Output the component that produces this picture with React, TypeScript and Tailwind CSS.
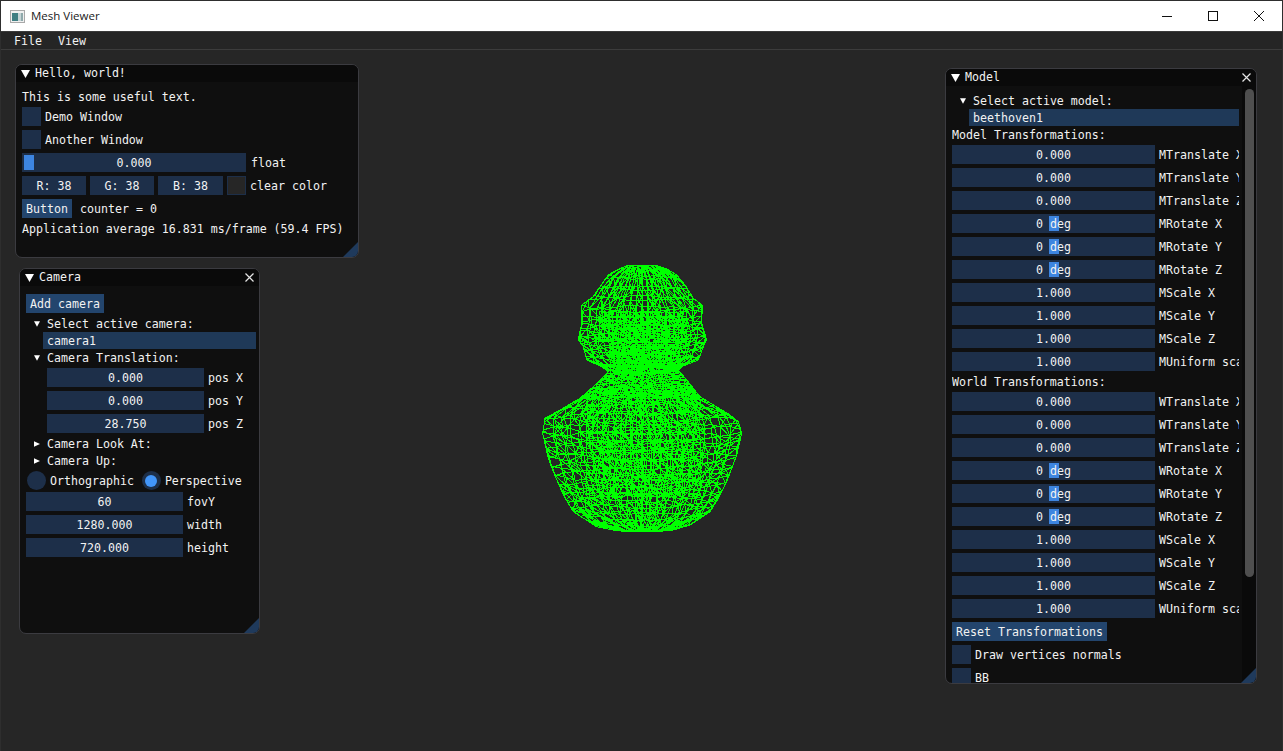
import React from 'react';

// outline of the bust, in zoomed units (3x, page offset 530,255)
const RIGHT: [number, number][] = [[32,380],[42,410],[60,440],[90,465],[130,490],[150,517],[205,515],[255,530],[275,520],[315,505],[335,455],[345,445],[375,470],[400,490],[425,510],[480,600],[500,625],[535,635],[600,620],[680,590],[730,565],[770,540],[810,480],[825,430],[830,380]];
const LEFT: [number, number][] = [[32,290],[45,260],[60,235],[95,210],[125,190],[150,155],[205,155],[255,145],[275,160],[315,170],[335,215],[350,235],[375,210],[395,190],[430,150],[465,90],[490,45],[535,38],[610,55],[650,70],[720,100],[770,130],[815,200],[825,250],[830,290]];

const lerpChain = (chain: [number, number][], y: number) => {
  for (let i = 0; i < chain.length - 1; i++) {
    const [y0, x0] = chain[i];
    const [y1, x1] = chain[i + 1];
    if (y >= y0 && y <= y1) return x0 + ((x1 - x0) * (y - y0)) / (y1 - y0);
  }
  return chain[y < chain[0][0] ? 0 : chain.length - 1][1];
};

const outline = [...RIGHT, ...[...LEFT].reverse()].map(([y, x]) => `${(x / 3).toFixed(1)},${(y / 3).toFixed(1)}`).join(' ');

const buildMesh = () => {
  let seed = 1337;
  const rnd = () => {
    seed = (seed * 16807) % 2147483647;
    return seed / 2147483647;
  };
  let d = '';
  const seg = (a: number[], b: number[]) => {
    d += `M${a[0].toFixed(1)} ${a[1].toFixed(1)}L${b[0].toFixed(1)} ${b[1].toFixed(1)}`;
  };
  const sheet = (top: number, bottom: number, cols: number, pow: number, sagK: number, step: (y: number) => number, jitter: number, minX = 0, maxX = 700) => {
    const ys: number[] = [];
    let y = top;
    while (y < bottom) {
      ys.push(y);
      y += step(y);
    }
    ys.push(bottom);
    const grid = ys.map((ry) => {
      const l = Math.max(lerpChain(LEFT, ry), minX);
      const r = Math.min(lerpChain(RIGHT, ry), maxX);
      const cx = (l + r) / 2;
      const hw = (r - l) / 2;
      return Array.from({ length: cols + 1 }, (_, i) => {
        const u = (i / cols) * 2 - 1;
        const s = Math.sign(u) * Math.pow(Math.abs(u), pow);
        const sag = (1 - s * s) * hw * sagK;
        return [(cx + hw * s + (rnd() - 0.5) * jitter) / 3, (ry + sag + (rnd() - 0.5) * jitter) / 3];
      });
    });
    grid.forEach((row, j) => {
      row.forEach((p, i) => {
        if (row[i + 1]) seg(p, row[i + 1]);
        const next = grid[j + 1];
        if (!next) return;
        seg(p, next[i]);
        if (next[i + 1] && rnd() > 0.45) seg(p, next[i + 1]);
        else if (next[i - 1] && rnd() > 0.6) seg(p, next[i - 1]);
      });
    });
  };
  // head: open cells with a tighter patch over the face
  sheet(32, 345, 14, 1.1, 0.1, (y) => (y < 170 ? 30 : 20), 6);
  sheet(40, 345, 18, 1.1, -0.08, (y) => (y < 170 ? 32 : 22), 6);
  sheet(170, 260, 22, 1.1, 0.02, () => 13, 4, 210, 470);
  // neck: nearly solid, filling out to the silhouette below the jaw
  sheet(265, 335, 20, 1.2, 0.03, () => 8, 6, 240, 450);
  sheet(330, 425, 24, 1.1, 0.03, () => 6, 6);
  // chest
  sheet(400, 830, 18, 1.1, 0.12, (y) => (y < 700 ? 26 : 20), 9);
  sheet(410, 830, 24, 1.15, -0.08, (y) => (y < 700 ? 28 : 22), 9);
  sheet(430, 720, 20, 1, 0.04, () => 20, 10, 170, 510);
  return d;
};

const meshPath = buildMesh();

const Arrow = ({ open, size = 'sm' }: { open: boolean; size?: 'sm' | 'lg' }) => (
  <svg width={size === 'lg' ? 9 : 6} height={size === 'lg' ? 8 : 6} viewBox="0 0 9 8" className="shrink-0">
    <polygon points={open ? '0,0 9,0 4.5,8' : '0,0 9,4 0,8'} fill="#fff" />
  </svg>
);

const CloseIcon = () => (
  <svg width="9" height="9" viewBox="0 0 9 9" className="shrink-0">
    <path d="M0.5 0.5L8.5 8.5M8.5 0.5L0.5 8.5" stroke="#e6e6e6" strokeWidth="1.2" />
  </svg>
);

const Field = ({ value, width, grab }: { value: string; width: string; grab?: boolean }) => (
  <div className={`relative h-[19px] shrink-0 bg-[#1d2f49] flex items-center justify-center ${width}`}>
    {grab && <div className="absolute left-1/2 -translate-x-1/2 top-[2px] w-[10px] h-[15px] bg-[#3d85e0]" />}
    <span className="relative pt-[3px]">{value}</span>
  </div>
);

const Row = ({ value, label, width, grab }: { value: string; label: string; width: string; grab?: boolean }) => (
  <div className="flex items-center gap-[4px] h-[19px] whitespace-nowrap">
    <Field value={value} width={width} grab={grab} />
    <span className="pt-[3px]">{label}</span>
  </div>
);

const Check = ({ label }: { label: string }) => (
  <div className="flex items-center gap-[4px] h-[19px] whitespace-nowrap">
    <div className="w-[19px] h-[19px] shrink-0 bg-[#1d2f49]" />
    <span className="pt-[3px]">{label}</span>
  </div>
);

const Tree = ({ label, open, indent }: { label: string; open: boolean; indent: string }) => (
  <div className={`flex items-center h-[17px] whitespace-nowrap ${indent}`}>
    <div className="w-[13px] shrink-0">
      <Arrow open={open} />
    </div>
    <span className="pt-[3px]">{label}</span>
  </div>
);

const Radio = ({ label, on }: { label: string; on?: boolean }) => (
  <div className="flex items-center gap-[4px]">
    <div className="w-[19px] h-[19px] rounded-full bg-[#1d2f49] flex items-center justify-center">
      {on && <div className="w-[12px] h-[12px] rounded-full bg-[#4296fa]" />}
    </div>
    <span className="pt-[3px]">{label}</span>
  </div>
);

const Panel = ({ title, pos, close, children }: { title: string; pos: string; close?: boolean; children: React.ReactNode }) => (
  <div className={`absolute flex flex-col overflow-hidden rounded-[7px] border border-[#3b3b40] bg-[#0f0f0f] ${pos}`}>
    <div className="flex items-center h-[17px] shrink-0 bg-[#0a0a0a] pl-[5px] pr-[5px]">
      <Arrow open size="lg" />
      <span className="ml-[5px] flex-1 pt-px">{title}</span>
      {close && <CloseIcon />}
    </div>
    {children}
    <div className="absolute right-0 bottom-0 w-[15px] h-[15px] bg-[#1f3a5c] [clip-path:polygon(100%_0,100%_100%,0_100%)]" />
  </div>
);

const MODEL_ROWS = (p: string) => [
  { label: `${p}Translate X`, value: '0.000' },
  { label: `${p}Translate Y`, value: '0.000' },
  { label: `${p}Translate Z`, value: '0.000' },
  { label: `${p}Rotate X`, value: '0 deg', grab: true },
  { label: `${p}Rotate Y`, value: '0 deg', grab: true },
  { label: `${p}Rotate Z`, value: '0 deg', grab: true },
  { label: `${p}Scale X`, value: '1.000' },
  { label: `${p}Scale Y`, value: '1.000' },
  { label: `${p}Scale Z`, value: '1.000' },
  { label: `${p}Uniform scale`, value: '1.000' },
];

const App: React.FC = () => {
  return (
    <div className="w-[1283px] h-[751px] flex flex-col overflow-hidden bg-[#262626] border-t border-x border-[#2e2e2e] font-['DejaVu_Sans_Mono',monospace] text-[11.62px] leading-none text-[#f2f2f2]">
      {/* Native title bar */}
      <div className="h-[30px] shrink-0 bg-white flex items-center border-b border-[#3a3a3a] box-content font-['Open_Sans',sans-serif] text-[11.5px] text-[#1a1a1a]">
        <svg width="15" height="13" viewBox="0 0 15 13" className="ml-[9px] mr-[6px]">
          <rect x="0.5" y="0.5" width="14" height="12" fill="#f0f0f0" stroke="#a9a9a9" />
          <rect x="2" y="3" width="6" height="8" fill="#3f7f83" />
          <rect x="8" y="3" width="3" height="8" fill="#c5d4d6" />
          <rect x="11" y="3" width="2" height="8" fill="#8fa9ab" />
        </svg>
        <span className="flex-1">Mesh Viewer</span>
        <div className="w-[46px] flex justify-center">
          <svg width="10" height="10" viewBox="0 0 10 10"><path d="M0 5.5H10" stroke="#111" /></svg>
        </div>
        <div className="w-[46px] flex justify-center">
          <svg width="10" height="10" viewBox="0 0 10 10"><rect x="0.5" y="0.5" width="9" height="9" fill="none" stroke="#111" /></svg>
        </div>
        <div className="w-[46px] flex justify-center">
          <svg width="10" height="10" viewBox="0 0 10 10"><path d="M0 0L10 10M10 0L0 10" stroke="#111" /></svg>
        </div>
      </div>

      {/* Menu bar */}
      <div className="h-[17px] shrink-0 box-content bg-[#252525] border-b border-[#3c3c3c] flex items-center gap-[16px] pl-[13px]">
        <span className="pt-[3px]">File</span>
        <span className="pt-[3px]">View</span>
      </div>

      {/* Canvas: floating windows */}
      <div className="relative flex-1">
        <svg width="225" height="285" viewBox="0 0 225 285" className="absolute left-[529px] top-[205px]">
          <defs>
            <clipPath id="bust">
              <polygon points={outline} />
            </clipPath>
          </defs>
          <path d={meshPath} fill="none" stroke="#00ff00" strokeWidth="1" shapeRendering="crispEdges" clipPath="url(#bust)" />
          <polygon points={outline} fill="none" stroke="#00ff00" strokeWidth="1" shapeRendering="crispEdges" />
        </svg>

        <Panel title="Hello, world!" pos="left-[14px] top-[14px] w-[344px] h-[194px]">
          <div className="flex flex-col px-[6px] pt-[7px]">
            <div className="h-[17px] flex items-center whitespace-nowrap pt-px">This is some useful text.</div>
            <div className="mt-[1px] flex flex-col gap-[4px]">
              <Check label="Demo Window" />
              <Check label="Another Window" />
              <div className="flex items-center gap-[5px] h-[19px]">
                <div className="relative w-[224px] h-[19px] bg-[#1d2f49] flex items-center justify-center">
                  <div className="absolute left-[2px] top-[2px] w-[10px] h-[15px] bg-[#3d85e0]" />
                  <span className="relative pt-[3px]">0.000</span>
                </div>
                <span className="pt-[3px]">float</span>
              </div>
              <div className="flex items-center gap-[4px] h-[19px]">
                <Field value="R: 38" width="w-[64px]" />
                <Field value="G: 38" width="w-[64px]" />
                <Field value="B: 38" width="w-[65px]" />
                <div className="w-[19px] h-[19px] bg-[#262626] border border-[#1d2f49]" />
                <span className="pt-[3px]">clear color</span>
              </div>
              <div className="flex items-center gap-[8px] h-[19px]">
                <div className="w-[50px] h-[19px] bg-[#23456d] flex items-center justify-center pt-[3px]">Button</div>
                <span className="pt-[3px]">counter = 0</span>
              </div>
            </div>
            <div className="mt-[2px] h-[17px] flex items-center whitespace-nowrap pt-[3px]">Application average 16.831 ms/frame (59.4 FPS)</div>
          </div>
        </Panel>

        <Panel title="Camera" pos="left-[18px] top-[218px] w-[241px] h-[366px]" close>
          <div className="flex flex-col px-[6px] pt-[8px]">
            <div className="w-[78px] h-[19px] bg-[#23456d] flex items-center justify-center pt-[3px]">Add camera</div>
            <div className="mt-[2px]">
              <Tree label="Select active camera:" open indent="pl-[8px]" />
            </div>
            <div className="ml-[17px] w-[213px] h-[17px] bg-[#1f3958] flex items-center pl-[4px] pt-[3px]">camera1</div>
            <Tree label="Camera Translation:" open indent="pl-[8px]" />
            <div className="mt-[2px] ml-[21px] flex flex-col gap-[4px]">
              <Row value="0.000" label="pos X" width="w-[157px]" />
              <Row value="0.000" label="pos Y" width="w-[157px]" />
              <Row value="28.750" label="pos Z" width="w-[157px]" />
            </div>
            <div className="mt-[2px]">
              <Tree label="Camera Look At:" open={false} indent="pl-[8px]" />
              <Tree label="Camera Up:" open={false} indent="pl-[8px]" />
            </div>
            <div className="mt-[2px] h-[19px] flex items-center gap-[8px] pl-px">
              <Radio label="Orthographic" />
              <Radio label="Perspective" on />
            </div>
            <div className="mt-[2px] flex flex-col gap-[4px]">
              <Row value="60" label="fovY" width="w-[157px]" />
              <Row value="1280.000" label="width" width="w-[157px]" />
              <Row value="720.000" label="height" width="w-[157px]" />
            </div>
          </div>
        </Panel>

        <Panel title="Model" pos="left-[944px] top-[18px] w-[312px] h-[616px]" close>
          <div className="flex flex-1 min-h-0">
            <div className="w-[293px] pl-[6px] pt-[6px] overflow-hidden">
              <div className="w-[287px] overflow-hidden flex flex-col">
                <Tree label="Select active model:" open indent="pl-[8px]" />
                <div className="ml-[17px] w-[270px] h-[17px] shrink-0 bg-[#1f3958] flex items-center pl-[4px] pt-[3px]">beethoven1</div>
                <div className="h-[17px] flex items-center pt-[3px]">Model Transformations:</div>
                <div className="mt-[2px] flex flex-col gap-[4px]">
                  {MODEL_ROWS('M').map((r) => (
                    <Row key={r.label} value={r.value} label={r.label} width="w-[203px]" grab={r.grab} />
                  ))}
                </div>
                <div className="mt-[2px] h-[17px] flex items-center pt-[3px]">World Transformations:</div>
                <div className="mt-[2px] flex flex-col gap-[4px]">
                  {MODEL_ROWS('W').map((r) => (
                    <Row key={r.label} value={r.value} label={r.label} width="w-[203px]" grab={r.grab} />
                  ))}
                </div>
                <div className="mt-[4px] flex flex-col gap-[4px]">
                  <div className="w-[155px] h-[19px] bg-[#23456d] flex items-center justify-center whitespace-nowrap pt-[3px]">Reset Transformations</div>
                  <Check label="Draw vertices normals" />
                  <Check label="BB" />
                </div>
              </div>
            </div>
            {/* Scrollbar */}
            <div className="w-[14px] bg-[#0a0a0a] pl-[3px] pt-[3px] ml-[3px]">
              <div className="w-[9px] h-[488px] rounded-full bg-[#4f4f4f]" />
            </div>
          </div>
        </Panel>
      </div>
    </div>
  );
};

export default App;
